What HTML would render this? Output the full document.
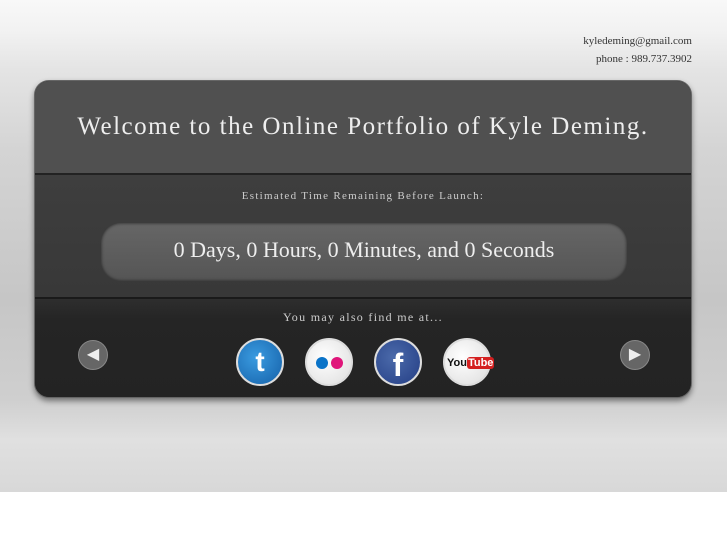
<!DOCTYPE html>
<html><head><meta charset="utf-8"><style>
html,body{margin:0;padding:0;width:727px;height:545px;overflow:hidden;background:#fff;font-family:"Liberation Serif",serif}
#bg{position:absolute;left:0;top:0;width:727px;height:492px;background:linear-gradient(#f8f8f8 0,#f2f2f2 30px,#e4e4e4 70px,#d4d4d4 150px,#c6c6c6 300px,#cfcfcf 400px,#e0e0e0 440px,#d8d8d8 492px)}
.c{position:absolute;right:35px;font-size:11px;color:#333;text-align:right}
#panel{position:absolute;left:34px;top:80px;width:658px;height:318px;border-radius:15px;overflow:hidden;background:#262626;box-shadow:0 3px 6px rgba(0,0,0,.45);border:1px solid #666;box-sizing:border-box}
#top{position:absolute;left:0;top:0;right:0;height:92px;background:#505050;border-bottom:2px solid #222}
#mid{position:absolute;left:0;top:94px;right:0;height:122px;background:linear-gradient(#3e3e3e,#383838);border-bottom:2px solid #1a1a1a}
#bot{position:absolute;left:0;top:218px;right:0;bottom:0;background:linear-gradient(#2e2e2e,#252525 20px,#232323)}
h1{position:absolute;left:0;right:0;top:32px;margin:0;text-align:center;font-weight:normal;font-size:25px;letter-spacing:1.5px;color:#eee}
.t{position:absolute;left:0;right:0;text-align:center;font-size:12px;letter-spacing:1.3px;color:#ccc}
#box{position:absolute;left:66px;top:142px;width:526px;height:58px;border-radius:20px;background:linear-gradient(#666,#555);box-shadow:0 0 3px #222 inset;color:#eee;font-size:22px;text-align:center;line-height:54px}
.ic{position:absolute;top:257px;width:48px;height:48px;border-radius:50%;border:2px solid #ddd;box-sizing:border-box}
.ar{position:absolute;top:259px;width:30px;height:30px;border-radius:50%;background:#666;border:1px solid #888;box-sizing:border-box;color:#eee;font-size:16px;text-align:center;line-height:28px}
</style></head><body>
<div id="bg"></div>
<div class="c" style="top:35px">kyledeming@gmail.com</div>
<div class="c" style="top:53px">phone : 989.737.3902</div>
<div id="panel">
<div id="top"><h1>Welcome to the Online Portfolio of Kyle Deming.</h1></div>
<div id="mid"><div class="t" style="top:15px;font-size:11px">Estimated Time Remaining Before Launch:</div></div>
<div id="box">0 Days, 0 Hours, 0 Minutes, and 0 Seconds</div>
<div id="bot"></div>
<div class="t" style="top:229px">You may also find me at...</div>
<div class="ar" style="left:43px">&#9664;</div>
<div class="ar" style="left:585px">&#9654;</div>
<div class="ic" style="left:201px;background:radial-gradient(circle at 40% 40%,#3a9be0,#1560a8)"><div style="color:#fff;font:bold 28px 'Liberation Sans',sans-serif;text-align:center;line-height:44px">t</div></div>
<div class="ic" style="left:270px;background:radial-gradient(circle at 40% 40%,#fff,#ddd)"><span style="position:absolute;left:9px;top:17px;width:12px;height:12px;border-radius:50%;background:#0a73c8"></span><span style="position:absolute;left:24px;top:17px;width:12px;height:12px;border-radius:50%;background:#e0157a"></span></div>
<div class="ic" style="left:339px;background:radial-gradient(circle at 40% 40%,#4b6aaa,#243e85)"><div style="color:#fff;font:bold 32px 'Liberation Sans',sans-serif;text-align:center;line-height:50px">f</div></div>
<div class="ic" style="left:408px;background:radial-gradient(circle at 40% 40%,#fff,#ddd)"><div style="position:absolute;left:2px;top:17px;font:bold 11px 'Liberation Sans',sans-serif;color:#111">You<span style="background:#d42020;color:#fff;border-radius:3px;padding:0 1px">Tube</span></div></div>
</div>
</body></html>
